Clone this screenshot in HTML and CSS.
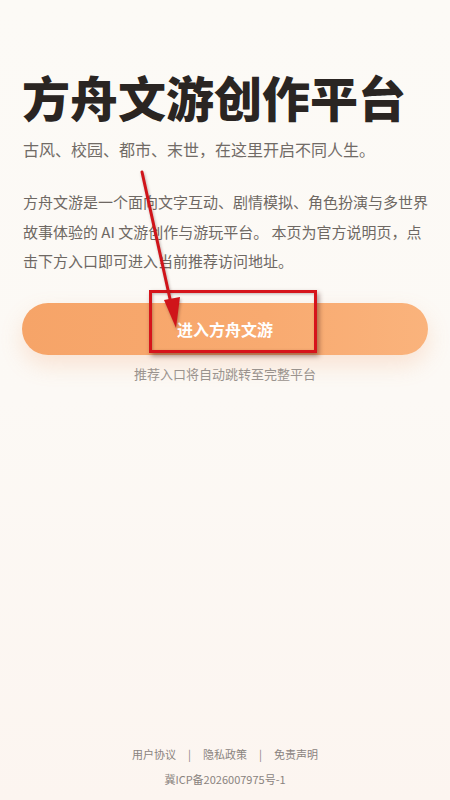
FILE: index.html
```html
<!DOCTYPE html>
<html lang="zh-CN">
<head>
<meta charset="utf-8">
<title>方舟文游创作平台</title>
<link rel="stylesheet" href="styles.css">
</head>
<body>
<div class="page">
  <main class="hero">
    <h1 class="title">方舟文游创作平台</h1>
    <p class="subtitle">古风、校园、都市、末世，在这里开启不同人生。</p>
    <p class="intro">方舟文游是一个面向文字互动、剧情模拟、角色扮演与多世界故事体验的 AI 文游创作与游玩平台。 本页为官方说明页，点击下方入口即可进入当前推荐访问地址。</p>
    <a class="enter" href="#">进入方舟文游</a>
    <p class="hint">推荐入口将自动跳转至完整平台</p>
  </main>
  <footer class="footer">
    <nav class="links">
      <a href="#">用户协议</a><span class="sep">|</span><a href="#">隐私政策</a><span class="sep">|</span><a href="#">免责声明</a>
    </nav>
    <p class="icp">冀ICP备2026007975号-1</p>
  </footer>
  <div class="mark-box"></div>
  <svg class="mark-arrow" width="450" height="400" viewBox="0 0 450 400" aria-hidden="true">
    <line x1="142" y1="172" x2="172" y2="308" stroke="#d0141a" stroke-width="3" stroke-linecap="round"/>
    <polygon points="176,328 164,300 180,297" fill="#d0141a"/>
  </svg>
</div>
</body>
</html>
```

FILE: styles.css
```css
html, body {
  margin: 0;
  padding: 0;
}
body {
  font-family: "Noto Sans CJK SC", "Noto Sans", sans-serif;
  background: linear-gradient(180deg, #fcfaf6 0%, #fcf9f5 50%, #fcf5f0 100%);
  color: #2a2522;
}
.page {
  position: relative;
  min-height: 800px;
  display: flex;
  flex-direction: column;
  box-sizing: border-box;
}
.hero {
  padding: 64px 22px 0;
}
.title {
  margin: 0;
  font-size: 48px;
  line-height: 64px;
  font-weight: 900;
  color: #2a2522;
  letter-spacing: 0;
  white-space: nowrap;
}
.subtitle {
  margin: 9px 0 0 1px;
  font-size: 16px;
  line-height: 24px;
  color: #716b66;
}
.intro {
  margin: 26px 0 0 1px;
  font-size: 15px;
  line-height: 29.5px;
  color: #6e6863;
}
.enter {
  display: flex;
  align-items: center;
  justify-content: center;
  height: 52px;
  margin-top: 27px;
  border-radius: 26px;
  background: linear-gradient(90deg, #f6a468 0%, #f8aa70 60%, #fab37c 100%);
  box-shadow: 0 10px 22px rgba(240, 150, 90, 0.22);
  color: #fff;
  font-size: 16px;
  font-weight: 700;
  text-decoration: none;
  letter-spacing: 0;
}
.hint {
  margin: 10px 0 0;
  text-align: center;
  font-size: 13px;
  line-height: 18px;
  color: #9a938e;
}
.footer {
  margin-top: auto;
  padding-bottom: 13px;
  text-align: center;
  font-size: 11px;
  color: #8a837e;
}
.links {
  display: flex;
  justify-content: center;
  align-items: center;
  gap: 12px;
  line-height: 16px;
}
.links a {
  color: #8a837e;
  text-decoration: none;
}
.sep {
  color: #8a837e;
}
.icp {
  margin: 9px 0 0;
  line-height: 16px;
}
.mark-box {
  position: absolute;
  left: 149px;
  top: 290px;
  width: 162px;
  height: 57px;
  border: 3px solid #d6141b;
  box-shadow: 2px 3px 5px rgba(60, 20, 20, 0.45), inset 1px 1px 3px rgba(60, 20, 20, 0.3);
}
.mark-arrow {
  position: absolute;
  left: 0;
  top: 0;
  pointer-events: none;
  filter: drop-shadow(1px 2px 1.5px rgba(60, 20, 20, 0.35));
}
```
